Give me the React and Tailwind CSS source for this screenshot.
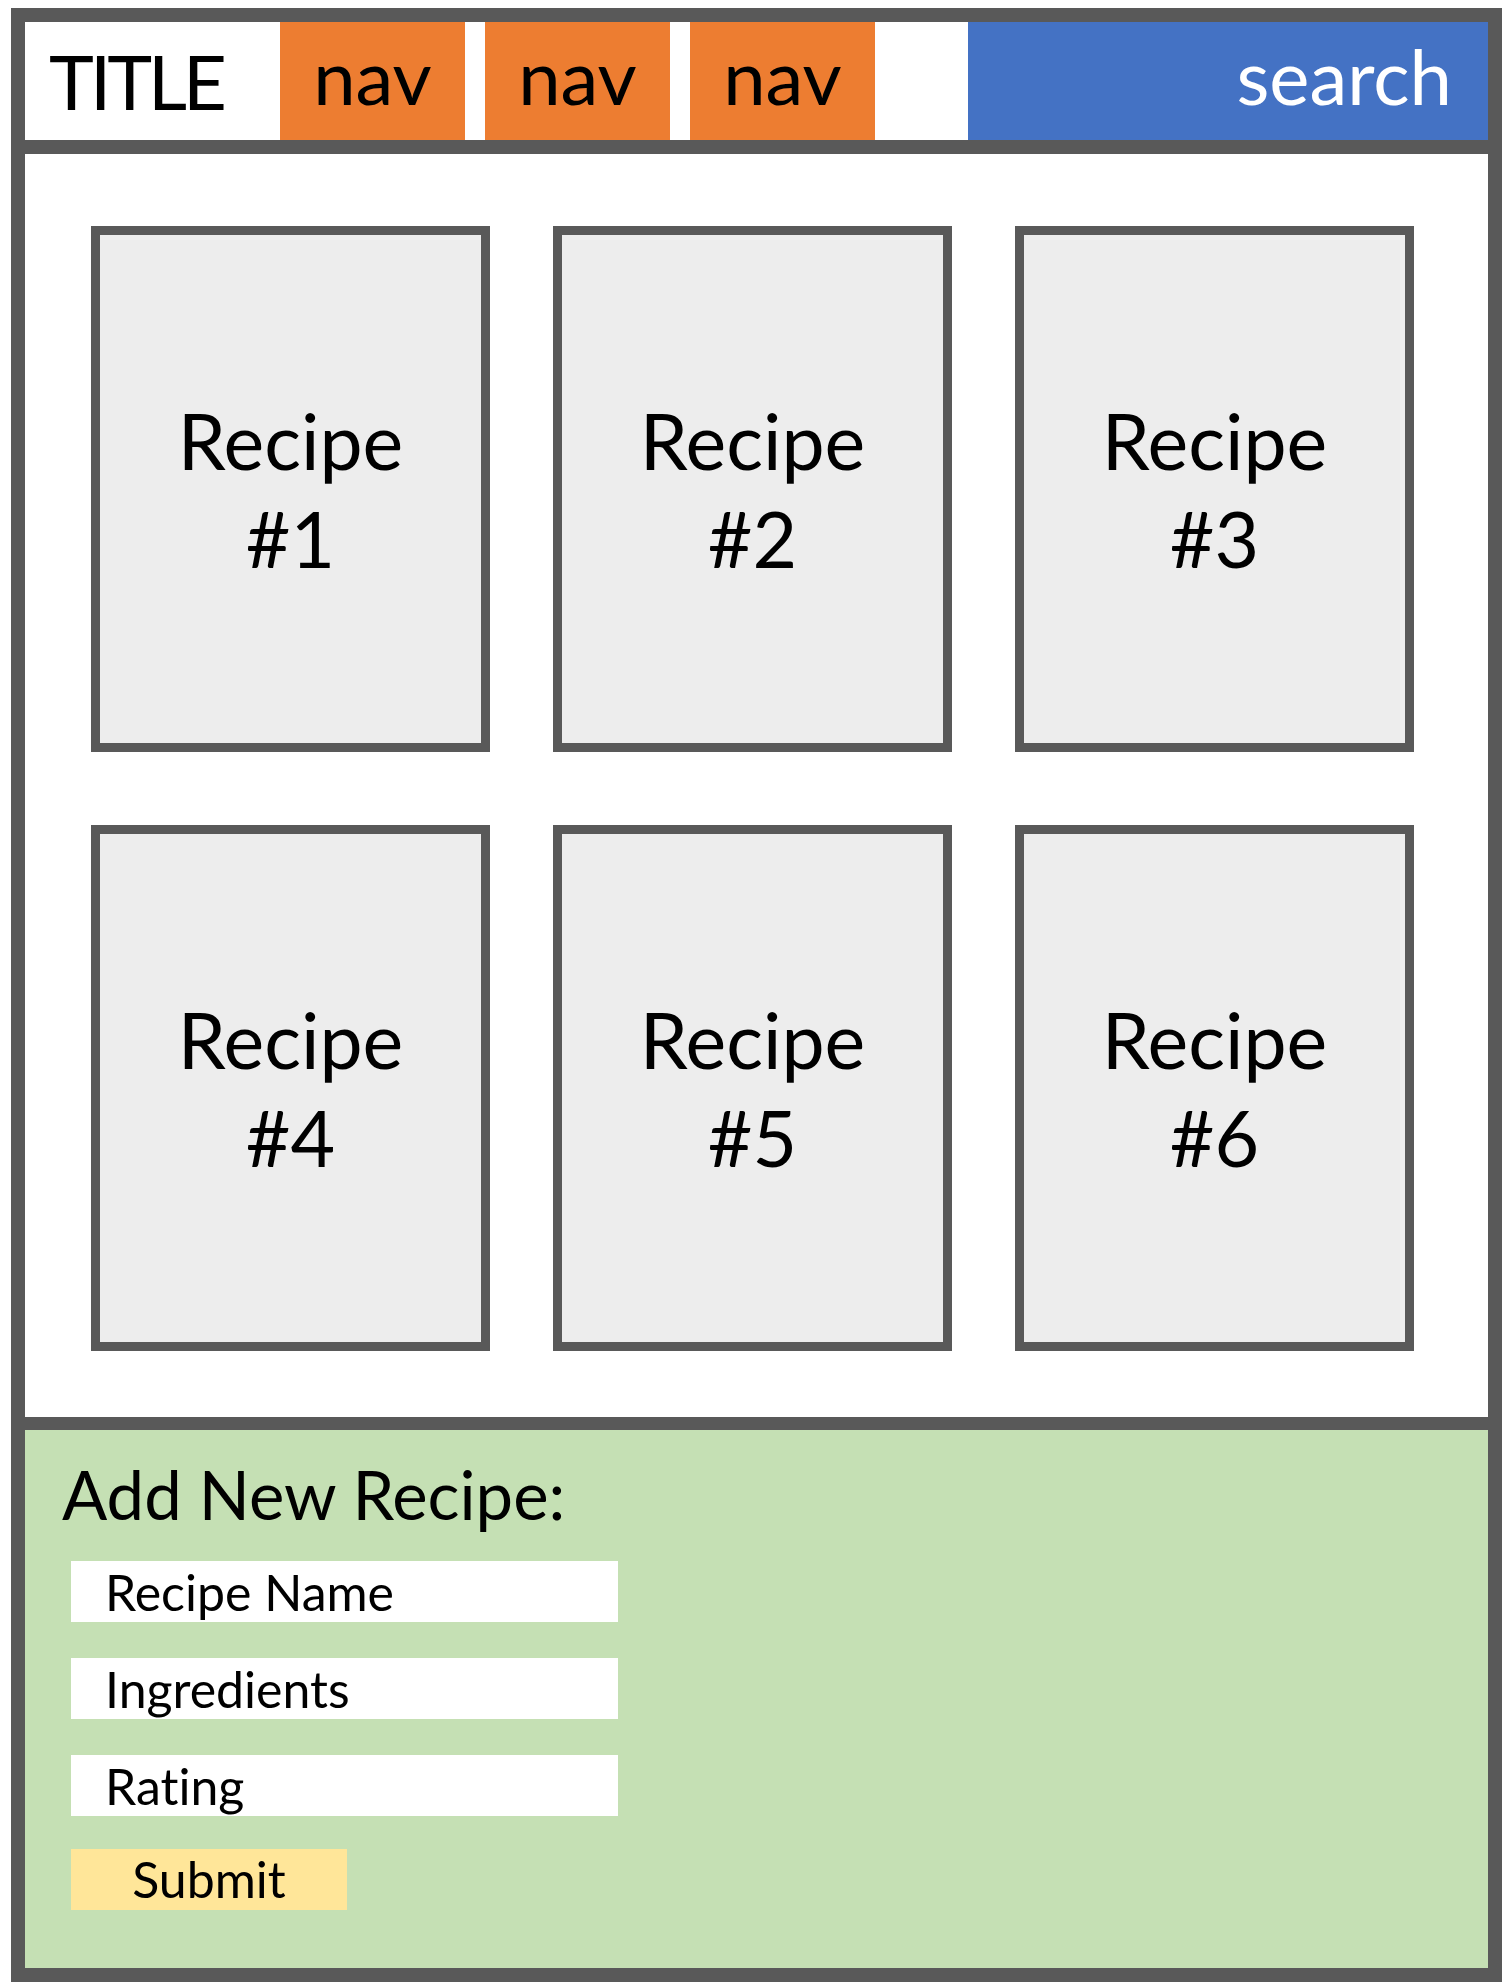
export default function App() {
  const recipes = [1, 2, 3, 4, 5, 6];
  const fields = ['Recipe Name', 'Ingredients', 'Rating'];

  return (
    <div className="w-[1507px] h-[1984px] bg-white pl-[11px] pt-[8px] font-['Lato',sans-serif] [font-variant-ligatures:none] text-black">
      {/* outer sketch frame */}
      <div className="w-[1491px] h-[1974px] border-[14px] border-[#595959] flex flex-col">
        {/* header bar */}
        <div className="h-[132px] shrink-0 flex border-b-[14px] border-[#595959]">
          <div className="w-[255px] flex items-center pl-[24px] text-[76px] leading-none tracking-[-4px]">TITLE</div>
          <div className="flex gap-[20px]">
            <div className="w-[185px] bg-[#ed7d31] flex items-center justify-center text-[76px] leading-none pb-[10px]">nav</div>
            <div className="w-[185px] bg-[#ed7d31] flex items-center justify-center text-[76px] leading-none pb-[10px]">nav</div>
            <div className="w-[185px] bg-[#ed7d31] flex items-center justify-center text-[76px] leading-none pb-[10px]">nav</div>
          </div>
          <div className="flex-1" />
          <div className="w-[520px] bg-[#4472c4] flex items-center justify-end pr-[36px] text-white text-[76px] leading-none pb-[10px]">
            search
          </div>
        </div>

        {/* recipe grid */}
        <div className="h-[1263px] shrink-0 pt-[72px] pl-[66px]">
          <div className="grid grid-cols-[399px_399px_399px] gap-x-[63px] gap-y-[73px]">
            {recipes.map((n) => (
              <div
                key={n}
                className="h-[526px] bg-[#ededed] border-[9px] border-[#595959] flex flex-col items-center justify-center text-[77px] leading-[98px] text-center"
              >
                <span>Recipe</span>
                <span>#{n}</span>
              </div>
            ))}
          </div>
        </div>

        {/* add form */}
        <div className="flex-1 bg-[#c5e0b4] border-t-[13px] border-[#595959] pt-[31px] pl-[37px]">
          <div className="text-[67px] leading-none">Add New Recipe:</div>
          <div className="mt-[33px] ml-[9px] flex flex-col gap-[36px]">
            {fields.map((f) => (
              <div key={f} className="w-[547px] h-[61px] bg-white pl-[34px] pt-[6px] text-[50px] leading-none">
                {f}
              </div>
            ))}
            <div className="w-[276px] h-[61px] -mt-[3px] bg-[#ffe699] flex justify-center pt-[5px] text-[50px] leading-none">
              Submit
            </div>
          </div>
        </div>
      </div>
    </div>
  );
}
